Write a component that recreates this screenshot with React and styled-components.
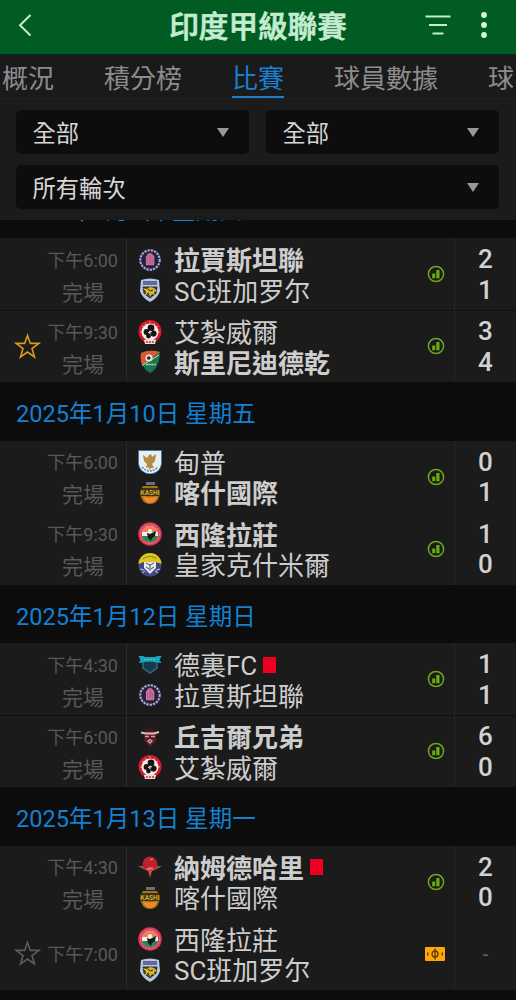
import React from 'react';
import styled, { createGlobalStyle } from 'styled-components';

const GlobalStyle = createGlobalStyle`
  * { box-sizing: border-box; }
  body {
    margin: 0;
    background: #0c0c0c;
    font-family: Roboto, "Noto Sans CJK TC", sans-serif;
    overflow: hidden;
  }
`;

const Screen = styled.div`
  width: 516px;
  height: 1000px;
  display: flex;
  flex-direction: column;
  overflow: hidden;
  background: #0c0c0c;
`;

const Header = styled.header`
  height: 55px;
  flex: none;
  display: grid;
  grid-template-columns: 100px 1fr 100px;
  align-items: center;
  background: #005c22;
  border-bottom: 1px solid #0b2a16;
  svg { display: block; }
`;
const Back = styled.div`
  padding-left: 17px;
  padding-bottom: 4px;
`;
const Title = styled.h1`
  margin: 0;
  color: #c4ecd0;
  font-size: 29.6px;
  font-weight: 500;
  line-height: 54px;
  text-align: center;
  white-space: nowrap;
  -webkit-text-stroke: 0.7px #c4ecd0;
`;
const Actions = styled.div`
  display: flex;
  align-items: center;
  gap: 29px;
  padding-left: 9px;
  padding-bottom: 4px;
`;

const Tabs = styled.nav`
  height: 44px;
  flex: none;
  display: flex;
  gap: 50px;
  padding-left: 2px;
  overflow: hidden;
  background: #1a1a1a;
  border-bottom: 1px solid #222222;
`;
const Tab = styled.div`
  flex: none;
  height: 43px;
  color: ${p => (p.$active ? '#1a7fd0' : '#8c8c8c')};
  border-bottom: 2px solid ${p => (p.$active ? '#1a7fd0' : 'transparent')};
  font-size: 26px;
  line-height: 48px;
  white-space: nowrap;
`;

const Filters = styled.div`
  height: 121px;
  flex: none;
  display: grid;
  grid-template-columns: 1fr 1fr;
  grid-auto-rows: 44px;
  gap: 11px 17px;
  padding: 11px 17px 0 16px;
  background: #1b1b1b;
`;
const Select = styled.div`
  grid-column: ${p => (p.$wide ? '1 / -1' : 'auto')};
  display: flex;
  align-items: center;
  justify-content: space-between;
  padding: 3px 20px 0 16.5px;
  border-radius: 5px;
  background: #0d0d0d;
  color: #d6d6d6;
  font-size: 23.3px;
  line-height: 42px;
`;
const Caret = styled.span`
  margin-top: -3px;
  border: 6.5px solid transparent;
  border-top: 9px solid #989898;
  border-bottom: 0;
`;

const List = styled.main`
  flex: 1;
  overflow: hidden;
`;
const DateRow = styled.div`
  height: 58.5px;
  margin-top: ${p => (p.$scrolled ? '-40.5px' : '0')};
  padding: ${p => (p.$scrolled ? '3px' : '4px')} 0 0 16px;
  color: #1580d2;
  font-size: 23.55px;
  line-height: 56px;
  white-space: nowrap;
`;
const Match = styled.div`
  height: 72px;
  display: grid;
  grid-template-columns: 127px 1fr 61px;
  background: #1b1b1b;
  box-shadow: ${p => (p.$divided ? 'inset 0 1px 0 #101010' : 'none')};
`;
const When = styled.div`
  display: grid;
  grid-template-columns: 40px 78px;
  align-items: center;
  border-right: 1px solid #2a2a2a;
`;
const StarSlot = styled.div`
  padding-left: 14px;
  svg { display: block; }
`;
const Times = styled.div`
  display: flex;
  flex-direction: column;
  padding-top: ${p => (p.$single ? '2px' : '5px')};
  color: #585858;
  white-space: nowrap;
`;
const Time = styled.div`
  font-size: 18px;
  line-height: 32px;
  text-align: right;
`;
const Status = styled.div`
  font-size: 21px;
  line-height: 32px;
  padding-left: 22px;
`;
const Fixture = styled.div`
  display: flex;
  align-items: center;
  justify-content: space-between;
  padding: 0 9px 0 11px;
  border-right: 1px solid #262626;
  & > svg { display: block; }
`;
const Teams = styled.div`
  display: flex;
  flex-direction: column;
  padding-top: 5px;
`;
const Team = styled.div`
  display: flex;
  align-items: center;
  height: 30.5px;
  & > svg { display: block; flex: none; margin-top: -3px; }
`;
const Name = styled.span`
  margin-left: 12px;
  color: #cdcdcd;
  font-size: 26px;
  font-weight: ${p => (p.$winner ? 700 : 400)};
  line-height: 30px;
  white-space: nowrap;
`;
const RedCard = styled.span`
  width: 13px;
  height: 16px;
  margin: -3px 0 0 6px;
  background: #f00020;
`;
const Scores = styled.div`
  display: flex;
  flex-direction: column;
  justify-content: center;
  padding-top: 1px;
  color: #d2d2d2;
  font-size: 26px;
  font-weight: 500;
  line-height: 30.5px;
  text-align: center;
`;
const NoScore = styled.span`
  color: #666666;
  font-size: 20px;
  font-weight: 400;
`;

const Star = ({ color }) => (
  <svg width="27" height="27" viewBox="0 0 27 27" fill="none" stroke={color} strokeWidth="1.6" strokeLinejoin="miter">
    <path d="M13.5 2.4 16.3 10.4H24.8L18 15.6 20.5 24 13.5 19.1 6.5 24 9 15.6 2.2 10.4H10.7Z" />
  </svg>
);

const StatsIcon = () => (
  <svg width="18" height="18" viewBox="0 0 18 18">
    <circle cx="9" cy="9" r="7.6" fill="none" stroke="#6da51c" strokeWidth="1.5" />
    <path d="M5.2 8.5h3v4.8h-3zM9.3 5h3.2v8.3H9.3z" fill="#68b005" />
  </svg>
);

const PitchIcon = () => (
  <svg width="20" height="14" viewBox="0 0 20 14">
    <rect width="20" height="14" rx="1" fill="#ffa60a" />
    <g fill="none" stroke="#573600" strokeWidth="1.3">
      <circle cx="10" cy="7" r="3" />
      <path d="M10 1.5v11M2.7 5.5v3M17.3 5.5v3" />
    </g>
  </svg>
);

const crests = {
  rajasthan: (
    <>
      <circle cx="12" cy="12" r="11.5" fill="#262644" />
      <circle cx="12" cy="12" r="9.7" fill="none" stroke="#b5b2c8" strokeWidth="2" strokeDasharray="2.2 1.1" />
      <circle cx="12" cy="12" r="7.5" fill="#251f42" />
      <path d="M8.5 16V9l1.5-2v9M11.2 16V6h1.6v10M14.2 16V7l1.5 2v7M8 16.5h8" fill="none" stroke="#cf7198" strokeWidth="1.3" />
    </>
  ),
  bengaluru: (
    <>
      <path d="M3 2Q12-1 21 2L22 13Q20 20 12 24 4 20 2 13Z" fill="#b4c8e6" />
      <path d="M5 3h14v4H5z" fill="#66679b" />
      <path d="M4.5 8.5h15l-1 7-6.5 5-6.5-5Z" fill="#36352d" />
      <path d="M5 10l4 1 3-2 4 1 3 3-3 1 1 3-3-1-2 3-1-3-4 1 1-3Z" fill="#d7b52b" />
      <path d="M10 11l2 2 3-1M9 16l2-1" stroke="#2b2920" fill="none" />
    </>
  ),
  aizawl: (
    <>
      <circle cx="12" cy="11.5" r="11.5" fill="#d5192b" />
      <path d="M4 6l2 1M7 3l1 2M12 1v2M17 3l-1 2M20 6l-2 1M2 12h2M20 12h2" stroke="#ec8a90" />
      <circle cx="12" cy="12" r="8.5" fill="#f4efed" />
      <g fill="#16120f">
        <circle cx="13" cy="8" r="3.4" />
        <circle cx="8.5" cy="12" r="2.9" />
        <circle cx="15.5" cy="13.5" r="3.1" />
        <circle cx="10.5" cy="16" r="2.4" />
      </g>
      <path d="M10 13l2-2 2 1" stroke="#e8e1d8" fill="none" />
      <path d="M6 20q6-2 12 0l-1 4H7Z" fill="#f1dcdc" />
      <path d="M8 22h8" stroke="#c62738" strokeWidth="1.5" strokeDasharray="2 1" />
    </>
  ),
  sreenidi: (
    <>
      <path d="M3 3q9-4 19-1-1 17-10 21Q2 18 3 3Z" fill="#16774b" />
      <path d="M3 3q9-4 19-1L4 15Q2 10 3 3Z" fill="#df5637" />
      <circle cx="11" cy="8" r="3.6" fill="#ece9db" />
      <path d="M9 7l2-1 2 2-2 2-2-1Z" fill="#27322d" />
      <path d="M4 15.5 21 5" stroke="#d7dfc9" strokeWidth="1" />
      <path d="M8 14.5h10" stroke="#b9d0b4" strokeWidth="1.5" strokeDasharray="2 .6" />
    </>
  ),
  dempo: (
    <>
      <path d="M.5.5h23V14Q22 23 12 24 2 23 .5 14Z" fill="#e8eef3" stroke="#2878b9" strokeWidth=".8" />
      <path d="M11 5l2-1 1 3 4-3-1 7-3 3 2 4h-3l-1 2-2-3-2 1 1-4-3-3-1-6 4 3Z" fill="#b58a42" />
      <path d="M4 17q8 8 16 0" fill="none" stroke="#4d84b5" strokeWidth="1.5" strokeDasharray="2 1" />
    </>
  ),
  kashi: (
    <>
      <path d="M8 1h9v3H8z" fill="#6e7078" />
      <path d="M5 5h14q4 5 2 11-2 7-9 7t-9-7Q1 10 5 5Z" fill="#a8701b" />
      <path d="M5 15q7 3 14 0-1 7-7 7t-7-7Z" fill="#f18a28" />
      <path d="M3 7h18v8H3z" fill="#3b3114" />
      <text x="12" y="13.5" textAnchor="middle" fontFamily="Roboto" fontSize="6.5" fontWeight="700" fill="#cdab2d">KASHI</text>
    </>
  ),
  shillong: (
    <>
      <circle cx="12" cy="12" r="11.8" fill="#d83655" />
      <circle cx="12" cy="12" r="9.7" fill="none" stroke="#ef9ba8" strokeWidth=".8" strokeDasharray="2 1" />
      <circle cx="12" cy="12" r="8.2" fill="#f2eee4" />
      <path d="M4 10q2-6 8-6 7 0 8 6Z" fill="#ef805a" />
      <path d="M4 14h16q-2 6-8 6t-8-6Z" fill="#238a4f" />
      <path d="M9 11l3 1 6-3-1 5-3 2-1 3-3-3Z" fill="#151819" />
      <circle cx="12" cy="9" r="2" fill="#f5f1ed" />
    </>
  ),
  kashmir: (
    <>
      <circle cx="12" cy="12" r="11.5" fill="#3f4685" />
      <path d="M.5 11a11.5 11 0 0 1 23 0L18 9H6Z" fill="#dbc51e" />
      <path d="M5 6q7-5 14 0" fill="none" stroke="#5e5a1c" strokeDasharray="2 1" />
      <path d="M6 9h12v6l-6 6-6-6Z" fill="#e6e7ee" />
      <path d="M8 10l4 2 4-2M12 12v6M8 14l3 2M16 14l-3 2" fill="none" stroke="#454d75" />
      <path d="M2 16l4 1M4 20l3-2M22 16l-4 1M20 20l-3-2" stroke="#c9cbdc" />
    </>
  ),
  delhi: (
    <>
      <path d="M5 8h14v7l-7 5-7-5Z" fill="#173950" stroke="#277080" strokeWidth="1.5" />
      <path d="M.5 3H5l2 1h10l2-1h4.5l-2 4 2 3-5-.5q-7-2-14 0L.5 10l2-3Z" fill="#18a5b8" />
      <path d="M6 6.5h12" stroke="#54c4cd" strokeDasharray="2 1" />
    </>
  ),
  churchill: (
    <>
      <path d="M7 4l3-2 2 1 3-1 2 3v3H7Z" fill="#35191d" />
      <path d="M4 7q8-2 16 0l-2 4v5l-6 6-6-6v-5Z" fill="#5c1a24" />
      <path d="M3 7.5l5 1h8l5-1.5" fill="none" stroke="#d8bcbc" strokeWidth="2" />
      <path d="M7 11.5h4M13 11.5h4M10 16l2-1.5 2 1.5-2 2Z" fill="none" stroke="#c9a3a5" strokeWidth="1.3" />
    </>
  ),
  namdhari: (
    <>
      <path d="M0 11h24l-5 3-5 1-2 8-2-8-5-1Z" fill="#866049" />
      <circle cx="12" cy="9" r="7.5" fill="#bd2030" />
      <path d="M6 14l4-1 2-2 2 2 4 1-4 2-2 5-2-5Z" fill="#db4343" />
      <path d="M9 14l6-1M12 5l3-1" stroke="#ef9a91" />
    </>
  ),
};

const Crest = ({ club }) => (
  <svg width="24" height="24" viewBox="0 0 24 24">{crests[club]}</svg>
);

const FINISHED = '完場';

const days = [
  {
    date: '2025年1月9日 星期四',
    scrolled: true,
    matches: [
      {
        time: '下午6:00', status: FINISHED, score: [2, 1],
        teams: [{ club: 'rajasthan', name: '拉賈斯坦聯', winner: true }, { club: 'bengaluru', name: 'SC班加罗尔' }],
      },
      {
        time: '下午9:30', status: FINISHED, score: [3, 4], star: '#d99a1a', divided: true,
        teams: [{ club: 'aizawl', name: '艾紮威爾' }, { club: 'sreenidi', name: '斯里尼迪德乾', winner: true }],
      },
    ],
  },
  {
    date: '2025年1月10日 星期五',
    matches: [
      {
        time: '下午6:00', status: FINISHED, score: [0, 1],
        teams: [{ club: 'dempo', name: '甸普' }, { club: 'kashi', name: '喀什國際', winner: true }],
      },
      {
        time: '下午9:30', status: FINISHED, score: [1, 0],
        teams: [{ club: 'shillong', name: '西隆拉莊', winner: true }, { club: 'kashmir', name: '皇家克什米爾' }],
      },
    ],
  },
  {
    date: '2025年1月12日 星期日',
    matches: [
      {
        time: '下午4:30', status: FINISHED, score: [1, 1],
        teams: [{ club: 'delhi', name: '德裏FC', red: true }, { club: 'rajasthan', name: '拉賈斯坦聯' }],
      },
      {
        time: '下午6:00', status: FINISHED, score: [6, 0], divided: true,
        teams: [{ club: 'churchill', name: '丘吉爾兄弟', winner: true }, { club: 'aizawl', name: '艾紮威爾' }],
      },
    ],
  },
  {
    date: '2025年1月13日 星期一',
    matches: [
      {
        time: '下午4:30', status: FINISHED, score: [2, 0],
        teams: [{ club: 'namdhari', name: '納姆德哈里', winner: true, red: true }, { club: 'kashi', name: '喀什國際' }],
      },
      {
        time: '下午7:00', star: '#5c5c5c',
        teams: [{ club: 'shillong', name: '西隆拉莊' }, { club: 'bengaluru', name: 'SC班加罗尔' }],
      },
    ],
  },
];

const MatchRow = ({ match }) => (
  <Match $divided={match.divided}>
    <When>
      <StarSlot>{match.star && <Star color={match.star} />}</StarSlot>
      <Times $single={!match.status}>
        <Time>{match.time}</Time>
        {match.status && <Status>{match.status}</Status>}
      </Times>
    </When>
    <Fixture>
      <Teams>
        {match.teams.map(team => (
          <Team key={team.club}>
            <Crest club={team.club} />
            <Name $winner={team.winner}>{team.name}</Name>
            {team.red && <RedCard />}
          </Team>
        ))}
      </Teams>
      {match.score ? <StatsIcon /> : <PitchIcon />}
    </Fixture>
    <Scores>
      {match.score ? match.score.map((goals, i) => <span key={i}>{goals}</span>) : <NoScore>-</NoScore>}
    </Scores>
  </Match>
);

const App = () => (
  <>
    <GlobalStyle />
    <Screen>
      <Header>
        <Back>
          <svg width="16" height="24" viewBox="0 0 16 24" fill="none" stroke="#c4ecd0" strokeWidth="2">
            <path d="M13.5 2 3 12.2 13.5 22.5" />
          </svg>
        </Back>
        <Title>印度甲級聯賽</Title>
        <Actions>
          <svg width="26" height="22" viewBox="0 0 26 22" stroke="#c4ecd0" strokeWidth="2">
            <path d="M.5 2.5h25M4 11h18M7.5 19.5h11" />
          </svg>
          <svg width="8" height="26" viewBox="0 0 8 26" fill="#d4f5de">
            <circle cx="4" cy="3" r="2.9" />
            <circle cx="4" cy="13" r="2.9" />
            <circle cx="4" cy="23" r="2.9" />
          </svg>
        </Actions>
      </Header>
      <Tabs>
        <Tab>概況</Tab>
        <Tab>積分榜</Tab>
        <Tab $active>比賽</Tab>
        <Tab>球員數據</Tab>
        <Tab>球</Tab>
      </Tabs>
      <Filters>
        <Select>全部<Caret /></Select>
        <Select>全部<Caret /></Select>
        <Select $wide>所有輪次<Caret /></Select>
      </Filters>
      <List>
        {days.map(day => (
          <React.Fragment key={day.date}>
            <DateRow $scrolled={day.scrolled}>{day.date}</DateRow>
            {day.matches.map((match, i) => <MatchRow key={i} match={match} />)}
          </React.Fragment>
        ))}
      </List>
    </Screen>
  </>
);

export default App;
